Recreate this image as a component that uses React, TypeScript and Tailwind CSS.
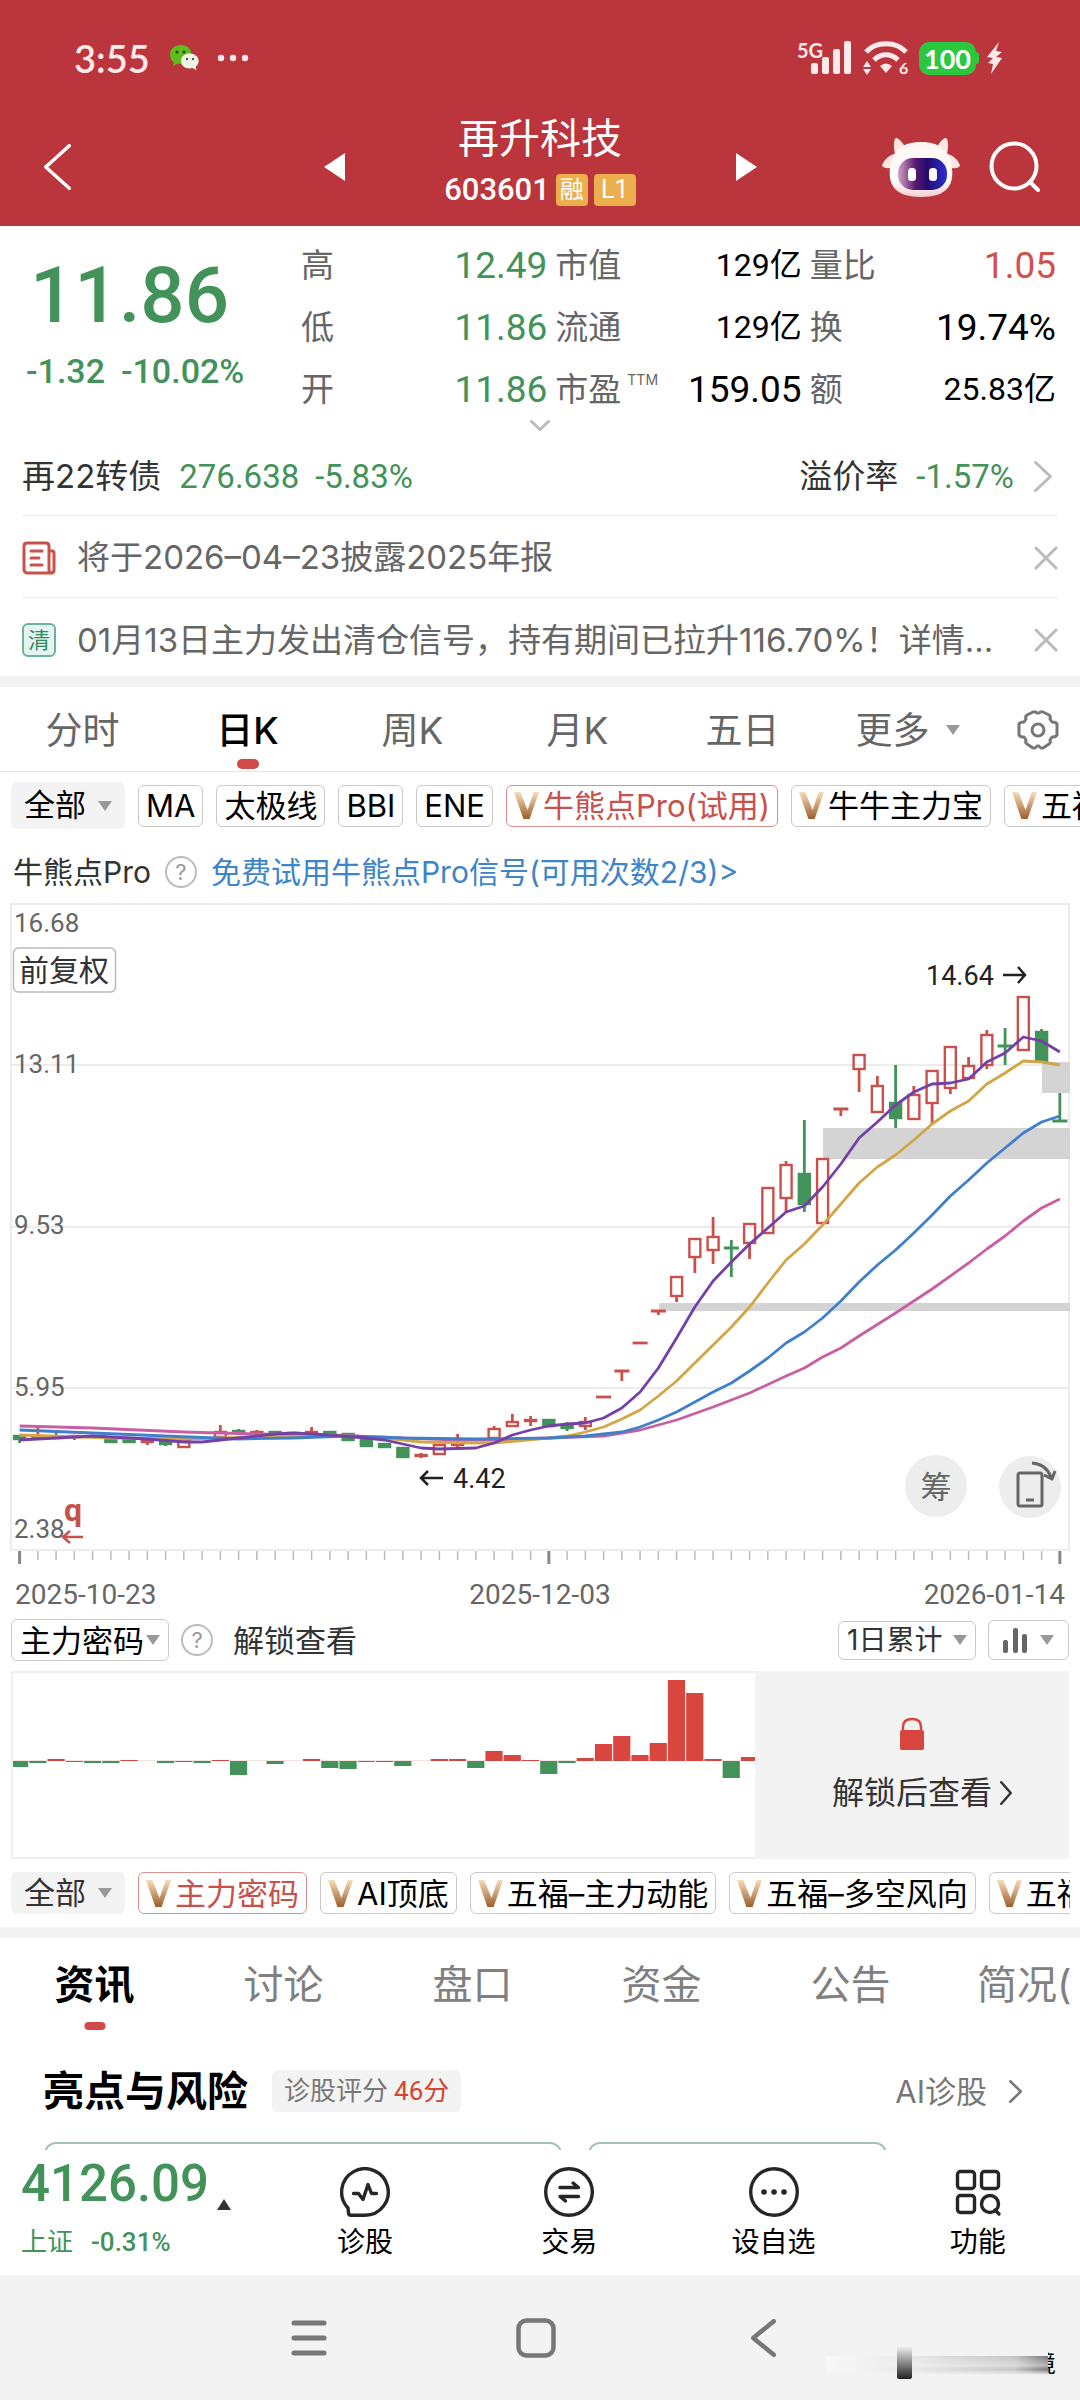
import type { ReactNode } from "react";

const NUM = "font-['Roboto','Noto_Sans_CJK_SC',sans-serif]";
const STATUS = "font-['Lato','Noto_Sans_CJK_SC',sans-serif]";

const RED = "#c9504b";
const GREEN = "#43925a";

// Chart geometry
const STEP = 18.25;
const px = (i: number) => 9.6 + STEP * i;

// [index, colour, open/close top, open/close bottom, wick top, wick bottom]
type Candle = [number, "r" | "g", number, number, number, number];

const candles: Candle[] = [
  [0, "g", 532, 537, 532, 540],
  [1, "r", 532, 534, 522, 535],
  [2, "r", 533, 535, 530, 536],
  [3, "r", 532, 535, 532, 537],
  [5, "g", 534, 540, 534, 540],
  [6, "g", 534, 540, 534, 540],
  [7, "r", 536, 540, 536, 542],
  [8, "g", 536, 542, 536, 543],
  [9, "r", 537, 545, 537, 545],
  [11, "r", 528, 535, 522, 535],
  [12, "g", 527, 530, 526, 530],
  [13, "r", 528, 531, 527, 532],
  [14, "g", 528, 531, 528, 531],
  [15, "r", 529, 531, 529, 532],
  [16, "r", 528, 530, 524, 531],
  [17, "g", 528, 530, 528, 531],
  [18, "g", 530, 538, 530, 538],
  [19, "g", 536, 544, 536, 544],
  [20, "g", 540, 545, 540, 545],
  [21, "g", 544, 555, 544, 555],
  [22, "r", 551, 554, 550, 555],
  [23, "r", 541, 552, 541, 552],
  [24, "r", 540, 543, 531, 546],
  [26, "r", 525, 536, 523, 536],
  [27, "r", 518, 524, 511, 524],
  [28, "r", 516, 519, 513, 523],
  [29, "g", 516, 524, 516, 524],
  [30, "g", 522, 526, 519, 528],
  [31, "r", 518, 524, 514, 527],
  [36, "r", 373, 394, 373, 399],
  [37, "r", 335, 355, 335, 370],
  [38, "r", 333, 348, 314, 361],
  [40, "r", 320, 341, 320, 356],
  [41, "r", 284, 331, 284, 331],
  [42, "r", 261, 296, 258, 309],
  [43, "g", 270, 302, 217, 309],
  [44, "r", 255, 321, 255, 321],
  [46, "r", 151, 167, 151, 189],
  [47, "r", 182, 210, 173, 210],
  [48, "g", 199, 216, 162, 225],
  [49, "r", 191, 217, 183, 217],
  [50, "r", 167, 201, 167, 221],
  [51, "r", 143, 186, 143, 191],
  [52, "r", 162, 176, 154, 176],
  [53, "r", 131, 163, 127, 166],
  [55, "r", 93, 148, 93, 148],
  [56, "g", 128, 159, 126, 159],
];

// Candles whose open and close are equal: [index, colour, level, high, low]
const dojis: [number, "r" | "g", number, number, number][] = [
  [32, "r", 494, 494, 494],
  [33, "r", 468, 468, 478],
  [34, "r", 440, 440, 440],
  [35, "r", 408, 408, 412],
  [39, "g", 345, 337, 374],
  [45, "r", 206, 206, 213],
  [54, "g", 143, 125, 162],
  [57, "g", 218, 190, 218],
];

type Line = { color: string; points: [number, number][] };

const lines: Line[] = [
  {
    color: "#c95fa3",
    points: [
      [0, 523], [4, 525], [9, 529], [13, 531], [17, 532], [21, 535], [24, 537], [26, 537],
      [29, 535], [32, 533], [34, 527], [36, 517], [38, 504], [40, 490], [42, 473], [43, 465],
      [44, 454], [45, 445], [46, 433], [48, 410], [50, 386], [52, 360], [53, 346], [54, 333],
      [55, 318], [56, 305], [57, 296],
    ],
  },
  {
    color: "#d3a545",
    points: [
      [0, 532], [5, 535], [9, 536], [13, 534], [17, 532], [20, 535], [22, 539], [25, 540],
      [26, 540], [29, 535], [30, 533], [31, 529], [32, 524], [33, 516], [34, 507], [35, 493],
      [36, 478], [37, 460], [38, 442], [39, 424], [40, 404], [41, 380], [42, 357], [43, 341],
      [44, 322], [45, 301], [46, 280], [47, 264], [48, 252], [49, 237], [50, 221], [51, 208],
      [52, 198], [53, 181], [54, 170], [55, 158], [56, 159], [57, 162],
    ],
  },
  {
    color: "#3f7fcb",
    points: [
      [0, 527], [4, 530], [8, 533], [12, 536], [15, 535], [18, 533], [21, 535], [25, 536],
      [29, 535], [31, 533], [33, 529], [34, 524], [35, 517], [36, 509], [37, 499], [38, 489],
      [39, 480], [40, 468], [41, 455], [42, 440], [43, 429], [44, 415], [45, 398], [46, 379],
      [47, 362], [48, 347], [49, 330], [50, 312], [51, 293], [52, 277], [53, 260], [54, 245],
      [55, 230], [56, 219], [57, 213],
    ],
  },
  {
    color: "#7440a8",
    points: [
      [0, 537], [3, 534], [4, 533], [7, 536], [9, 539], [10, 539], [12, 535], [14, 531],
      [15, 530], [17, 532], [19, 535], [20, 537], [21, 541], [22, 545], [23, 546], [25, 545],
      [26, 540], [27, 532], [28, 527], [29, 523], [30, 521], [31, 520], [32, 515], [33, 505],
      [34, 489], [35, 465], [36, 435], [37, 404], [38, 378], [39, 359], [40, 341], [41, 325],
      [42, 309], [43, 303], [44, 284], [45, 261], [46, 235], [47, 219], [48, 202], [49, 189],
      [50, 181], [51, 180], [52, 176], [53, 159], [54, 150], [55, 134], [56, 138], [57, 149],
    ],
  },
];

const gaps = [
  { x: 649, y: 400, h: 8 },
  { x: 813, y: 225, h: 31 },
  { x: 1032, y: 159, h: 31 },
];

// Main-force volume, positive above the zero line
const volumes = [
  -6, -2, 2, -1, -2, -2, 1, 0, -2, -1, -2, 1, -14, 0, -3, 0, 2, -7, -8, -1, -1, -5, 0, 2, 2, -7,
  10, 6, 1, -13, -2, 3, 17, 25, 6, 18, 81, 68, 2, -17, 4,
];

function Chevron({ dir, w, h, stroke, className = "" }: { dir: "left" | "right" | "down"; w: number; h: number; stroke: number; className?: string }) {
  const m = stroke / 2;
  const d = {
    left: `M${w - m} ${m}L${m} ${h / 2}L${w - m} ${h - m}`,
    right: `M${m} ${m}L${w - m} ${h / 2}L${m} ${h - m}`,
    down: `M${m} ${m}L${w / 2} ${h - m}L${w - m} ${m}`,
  }[dir];
  return (
    <svg width={w} height={h} className={className} fill="none" stroke="currentColor" strokeWidth={stroke} strokeLinecap="round" strokeLinejoin="round">
      <path d={d} />
    </svg>
  );
}

function Caret() {
  return (
    <svg width="14" height="10" className="shrink-0 text-[#999]" fill="currentColor">
      <path d="M0 0h14L7 10z" />
    </svg>
  );
}

function DropDown({ label, value, className = "" }: { label: string; value: string; className?: string }) {
  return (
    <label className={`flex shrink-0 items-center ${className}`}>
      <select aria-label={label} className="appearance-none bg-transparent outline-none">
        <option>{value}</option>
      </select>
      <Caret />
    </label>
  );
}

function VipMark() {
  return (
    <svg width="25" height="27" viewBox="0 0 24 27" preserveAspectRatio="none" className="shrink-0">
      <defs>
        <linearGradient id="vip" x1="0" y1="0" x2="0" y2="1">
          <stop offset="0" stopColor="#f8dcb8" />
          <stop offset="1" stopColor="#9c5f2e" />
        </linearGradient>
      </defs>
      <path d="M0 0h6l7 18 6-18h5l-9 27H9z" fill="url(#vip)" />
    </svg>
  );
}

function Chip({ children, vip, active }: { children: ReactNode; vip?: boolean; active?: boolean }) {
  return (
    <button
      className={`flex h-[42px] shrink-0 items-center gap-1 rounded-md border px-[7px] text-[31px] leading-none whitespace-nowrap ${
        active ? "border-[#d98f8b] text-[#c9504b]" : "border-[#c9c9c9] text-black"
      }`}
    >
      {vip && <VipMark />}
      {children}
    </button>
  );
}

function Help() {
  return (
    <button aria-label="说明" className="flex size-8 shrink-0 items-center justify-center rounded-full border-2 border-[#bbb] text-[22px] leading-none text-[#999]">
      ?
    </button>
  );
}

function StatusBar() {
  return (
    <div className={`flex h-19 items-start justify-between pt-10 pr-[77px] pl-[74px] text-[#ffe9ea] ${STATUS}`}>
      <div className="flex h-9 items-center">
        <span className="text-[38px] leading-9 font-semibold">3:55</span>
        <svg width="29" height="26" viewBox="0 0 29 26" className="ml-5">
          <path d="M10.500 0C4.500 0 0 4 0 9.500c0 3.500 1.500 6 4 8l-1 3.500 4.500-2.500c8 1.500 14-3 14-9C21.500 4 17 0 10.500 0z" fill="#5fbb1e" />
          <circle cx="7" cy="7" r="1.500" fill="#1d4a08" />
          <circle cx="14" cy="7" r="1.500" fill="#1d4a08" />
          <path d="M19.500 8.500c-5 0-8.500 3.300-8.500 7.500s3.500 7.500 8.500 7.500c1 0 2-.1 3-.4L26.500 25l-.8-3.400c2-1.500 3-3.300 3-5.600 0-4.200-4-7.500-9.200-7.500z" fill="#eef6e6" />
          <circle cx="17" cy="14" r="1.200" fill="#555" />
          <circle cx="23" cy="14" r="1.200" fill="#555" />
        </svg>
        <svg width="32" height="8" className="ml-[18px]" fill="currentColor">
          <circle cx="4" cy="4" r="3.200" />
          <circle cx="16" cy="4" r="3.200" />
          <circle cx="28" cy="4" r="3.200" />
        </svg>
      </div>
      <div className="flex h-9 items-center">
        <span className="self-start text-[20px] leading-none font-bold">5G</span>
        <svg width="42" height="34" viewBox="0 0 42 34" className="-ml-3" fill="currentColor">
          <rect x="0" y="22" width="7" height="11" rx="2" />
          <rect x="11" y="16" width="7" height="17" rx="2" />
          <rect x="22" y="8" width="7" height="25" rx="2" />
          <rect x="33" y="0" width="7" height="33" rx="2" />
        </svg>
        <svg width="46" height="34" viewBox="0 0 46 34" className="ml-2.5 overflow-visible" fill="none" stroke="currentColor">
          <path d="M3 11C13 0 33 0 43 11" strokeWidth="5" />
          <path d="M11 19c7-7 17-7 24 0" strokeWidth="5" />
          <path d="M17 25q6-5 12 0l-6 7z" fill="currentColor" stroke="none" />
          <path d="M0 26l4-6 4 6zM0 28l4 6 4-6z" fill="currentColor" stroke="none" />
          <text x="36" y="33" fontSize="16" fontWeight="700" fill="currentColor" stroke="none">6</text>
        </svg>
        <div className="ml-2.5 flex h-[33px] w-[57px] items-center justify-center rounded-[10px] bg-[#2bc83f] text-[27px] leading-none font-bold text-white">100</div>
        <div className="h-3 w-[3px] rounded-r-sm bg-[#2bc83f]" />
        <svg width="16" height="32" viewBox="0 0 16 32" className="ml-2" fill="currentColor">
          <path d="M12 0L0 15l6 1-5 5 5 1-2 10L15 16l-6-1 6-5-6-1z" />
        </svg>
      </div>
    </div>
  );
}

function Robot() {
  return (
    <svg width="78" height="61" viewBox="0 0 78 61">
      <defs>
        <linearGradient id="face" x1="0" y1="0" x2="1" y2="0">
          <stop offset="0" stopColor="#d3a3c4" />
          <stop offset="0.350" stopColor="#5a1a72" />
          <stop offset="0.600" stopColor="#250a6e" />
          <stop offset="1" stopColor="#2a2fd6" />
        </linearGradient>
        <linearGradient id="head" x1="0" y1="0" x2="0" y2="1">
          <stop offset="0" stopColor="#fdf4f2" />
          <stop offset="0.700" stopColor="#ffffff" />
          <stop offset="1" stopColor="#f3cfd0" />
        </linearGradient>
      </defs>
      <path d="M13 17C11 8 12 0 15 1c4 2 7 7 9 11zM65 17c2-9 1-17-2-16-4 2-7 7-9 11z" fill="#fbe6e2" />
      <path d="M15 16C6 18 1 24 0 29c3 3 9 3 14 0zM63 16c9 2 14 8 15 13-3 3-9 3-14 0z" fill="#fbe6e2" />
      <path d="M39 5C19 5 10 15 8 31c-2 18 6 29 31 29s33-11 31-29C68 15 59 5 39 5z" fill="url(#head)" />
      <rect x="16" y="21" width="49" height="32" rx="15" fill="url(#face)" />
      <rect x="26" y="31" width="8" height="13" rx="3.500" fill="#fff" />
      <rect x="47" y="31" width="8" height="13" rx="3.500" fill="#fff" />
    </svg>
  );
}

function Header() {
  return (
    <header className="bg-[#bb353c] text-white">
      <StatusBar />
      <div className="grid h-[150px] grid-cols-[1fr_433px_1fr] items-center px-10 pt-8">
        <button aria-label="返回" className="ml-1 justify-self-start">
          <Chevron dir="left" w={27} h={46} stroke={3.5} />
        </button>
        <div className="flex items-center justify-between">
          <button aria-label="上一只">
            <svg width="21" height="28" fill="currentColor"><path d="M21 0v28L0 14z" /></svg>
          </button>
          <div className="flex flex-col items-center gap-[15px] pb-3">
            <h1 className="text-[41px] leading-[42px]">再升科技</h1>
            <div className="flex h-8 items-center gap-1.5">
              <span className={`text-[31px] leading-none font-medium ${NUM}`}>603601</span>
              <span className="flex size-8 items-center justify-center rounded bg-[#ebaf4e] text-[24px] leading-none">融</span>
              <span className={`flex h-8 w-[42px] items-center justify-center rounded bg-[#ebaf4e] text-[25px] leading-none ${NUM}`}>L1</span>
            </div>
          </div>
          <button aria-label="下一只">
            <svg width="21" height="28" fill="currentColor"><path d="M0 0v28l21-14z" /></svg>
          </button>
        </div>
        <div className="flex items-center gap-7 justify-self-end">
          <button aria-label="智能助手"><Robot /></button>
          <button aria-label="搜索">
            <svg width="52" height="52" viewBox="0 0 52 52" fill="none" stroke="currentColor" strokeWidth="4" strokeLinecap="round">
              <circle cx="26" cy="25" r="22.500" />
              <path d="M42 41l8 8" />
            </svg>
          </button>
        </div>
      </div>
    </header>
  );
}

const stats = [
  { name: "高", value: "12.49", tone: "text-[#43925a]" },
  { name: "市值", value: "129亿", tone: "text-black", small: true },
  { name: "量比", value: "1.05", tone: "text-[#d2504c]" },
  { name: "低", value: "11.86", tone: "text-[#43925a]" },
  { name: "流通", value: "129亿", tone: "text-black", small: true },
  { name: "换", value: "19.74%", tone: "text-black" },
  { name: "开", value: "11.86", tone: "text-[#43925a]" },
  { name: "市盈", mark: "TTM", value: "159.05", tone: "text-black" },
  { name: "额", value: "25.83亿", tone: "text-black", small: true },
];

function Quote() {
  return (
    <section className="pt-2">
      <div className="flex pr-6">
        <div className={`w-[301px] shrink-0 pl-[26px] text-[#43925a] ${NUM}`}>
          <div className="pt-6 pl-1 text-[78px] leading-[76px] font-medium">11.86</div>
          <div className="mt-5 flex gap-4 text-[34px] leading-[34px] font-medium">
            <span>-1.32</span>
            <span>-10.02%</span>
          </div>
        </div>
        <dl className="grid flex-1 grid-cols-3 gap-x-2">
          {stats.map((s) => (
            <div key={s.name} className="flex h-[62px] items-center justify-between">
              <dt className="flex text-[33px] leading-none text-[#666]">
                {s.name}
                {s.mark && <sup className="top-0 ml-1.5 self-start text-[14px] leading-none">{s.mark}</sup>}
              </dt>
              <dd className={`leading-none ${NUM} ${s.tone} ${s.small ? "text-[32px]" : "text-[37px]"}`}>{s.value}</dd>
            </div>
          ))}
        </dl>
      </div>
      <button aria-label="展开" className="flex h-[18px] w-full items-start justify-center text-[#bbb]">
        <Chevron dir="down" w={20} h={11} stroke={3} />
      </button>
    </section>
  );
}

function Close() {
  return (
    <button aria-label="关闭" className="ml-auto text-[#bbb]">
      <svg width="24" height="24" fill="none" stroke="currentColor" strokeWidth="3" strokeLinecap="round">
        <path d="M2 2l20 20M22 2L2 22" />
      </svg>
    </button>
  );
}

function Notices() {
  return (
    <section className="px-[22px] text-[33px] leading-none whitespace-nowrap">
      <a href="#bond" className="flex h-[78px] items-center border-b border-[#eee] text-[#333]">
        <span>再22转债</span>
        <span className={`ml-[18px] flex gap-4 text-[33px] text-[#43925a] ${NUM}`}>
          <span>276.638</span>
          <span>-5.83%</span>
        </span>
        <span className="ml-auto">溢价率</span>
        <span className={`ml-[18px] text-[33px] text-[#43925a] ${NUM}`}>-1.57%</span>
        <Chevron dir="right" w={18} h={31} stroke={3} className="mr-1.5 ml-5 text-[#bbb]" />
      </a>
      <div className="flex h-[82px] items-center border-b border-[#eee] pt-0.5 text-[#666]">
        <svg width="34" height="34" viewBox="0 0 34 34" fill="none" stroke="#c9504b" strokeWidth="3" strokeLinejoin="round" strokeLinecap="round">
          <path d="M27 10V5q0-3-3-3H5Q2 2 2 5v23q0 4 4 4h23q3 0 3-3V12q0-2-2-2h-3v19q0 3 3 3" />
          <path d="M9 10h11M9 17h8M9 24h11" />
        </svg>
        <span className="ml-[21px]">将于2026–04–23披露2025年报</span>
        <Close />
      </div>
      <div className="flex h-[78px] items-center pt-1.5 text-[#666]">
        <span className="flex size-[34px] shrink-0 items-center justify-center rounded-md border-2 border-[#6db39c] bg-[#e6f4f1] text-[22px] text-[#2f8a5c]">清</span>
        <span className="ml-[21px]">01月13日主力发出清仓信号，持有期间已拉升116.70%！详情...</span>
        <Close />
      </div>
    </section>
  );
}

function PeriodTabs() {
  const tabs = ["分时", "日K", "周K", "月K", "五日"];
  return (
    <nav className="flex h-[85px] items-center border-b border-[#e6e6e6] pt-0.5 text-[37px] leading-none text-[#666]">
      {tabs.map((t) => (
        <button key={t} className={`relative h-full flex-1 ${t === "日K" ? "font-medium text-black" : ""}`}>
          {t}
          {t === "日K" && <span className="absolute bottom-0.5 left-1/2 h-2.5 w-[22px] -translate-x-1/2 rounded-full bg-[#d24a47]" />}
        </button>
      ))}
      <DropDown label="更多周期" value="更多" className="flex-1 justify-center gap-4" />
      <button aria-label="设置" className="flex w-[90px] justify-center pl-1.5">
        <svg width="42" height="42" viewBox="0 0 42 42" fill="none" stroke="#777" strokeWidth="3" strokeLinejoin="round">
          <path d="M16 3q2-1 4 1h2q2-2 4-1l6 3q2 1 1 4l2 3q4 0 5 2v11q-1 2-5 2l-2 3q1 3-1 4l-6 4q-2 1-4-2h-2q-2 3-4 2l-6-4q-2-1-1-4l-2-3q-4 0-5-2V15q1-2 5-2l2-3q-1-3 1-4z" />
          <circle cx="21" cy="21" r="6" />
        </svg>
      </button>
    </nav>
  );
}

function KLineChart() {
  return (
    <svg viewBox="0 0 1060 676" className={`block h-auto w-full ${NUM}`} role="img" aria-label="日K线图">
      <g stroke="#ececec" strokeWidth="2" fill="none">
        <rect x="1" y="1" width="1058" height="646" />
        <path d="M1 162H1059M1 324H1059M1 485H1059" />
      </g>
      {gaps.map((g) => (
        <rect key={g.x} x={g.x} y={g.y} width={1060 - g.x} height={g.h} fill="#d4d4d4" />
      ))}
      {Array.from({ length: 58 }, (_, i) => {
        const major = i === 0 || i === 29 || i === 57;
        return <path key={i} d={`M${px(i)} 648V${major ? 661 : 657}`} stroke={major ? "#888" : "#bbb"} strokeWidth={major ? 3 : 1.5} />;
      })}
      {candles.map(([i, c, top, bottom, high, low]) => {
        const color = c === "r" ? RED : GREEN;
        const hollow = c === "r" && bottom - top > 4;
        return (
          <g key={i} stroke={color} strokeWidth="2.400">
            <path d={`M${px(i)} ${high}V${top}M${px(i)} ${bottom}V${low}`} strokeWidth="2.800" />
            <rect x={px(i) - 5.5} y={top + 1} width="11" height={Math.max(bottom - top - 2, 1)} fill={hollow ? "none" : color} />
          </g>
        );
      })}
      {dojis.map(([i, c, level, high, low]) => (
        <path key={i} d={`M${px(i) - 7.500} ${level}h15M${px(i)} ${high}V${low}`} stroke={c === "r" ? RED : GREEN} strokeWidth="2.800" />
      ))}
      {lines.map((l) => (
        <polyline key={l.color} points={l.points.map(([i, y]) => `${px(i)},${y}`).join(" ")} fill="none" stroke={l.color} strokeWidth="2.800" strokeLinejoin="round" />
      ))}
      <g fontSize="26" fill="#666">
        <text x="4" y="29">16.68</text>
        <text x="4" y="170">13.11</text>
        <text x="4" y="331">9.53</text>
        <text x="4" y="493">5.95</text>
        <text x="4" y="635">2.38</text>
      </g>
      <rect x="3.500" y="45" width="102" height="44" rx="5" fill="#fff" stroke="#bbb" strokeWidth="1.500" />
      <text x="9" y="78" fontSize="30" fill="#333">前复权</text>
      <g fontSize="27" fill="#222">
        <text x="916" y="82">14.64</text>
        <text x="443" y="585">4.42</text>
      </g>
      <g fill="none" stroke="#222" strokeWidth="2.500">
        <path d="M993 72h22M1008 64l7 8-7 8" />
        <path d="M433 575h-22M418 568l-7 7 7 7" />
      </g>
      <text x="54" y="618" fontSize="32" fontWeight="700" fill={RED}>q</text>
      <path d="M73 634H53M60 628l-7 6 7 6" fill="none" stroke={RED} strokeWidth="2.500" />
      <circle cx="926" cy="583" r="31" fill="#ededed" />
      <text x="926" y="595" fontSize="31" fill="#666" textAnchor="middle">筹</text>
      <circle cx="1020" cy="584" r="31" fill="#ededed" />
      <g fill="none" stroke="#666" strokeWidth="3" strokeLinejoin="round">
        <rect x="1008" y="570" width="24" height="33" rx="2" />
        <path d="M1016 597h8" />
        <path d="M1022 560q14 1 19 14M1034 572l8 4 3-8" />
      </g>
    </svg>
  );
}

function MainChart() {
  return (
    <section>
      <div className="flex h-[67px] items-center gap-[13px] overflow-hidden pl-[11px]">
        <DropDown label="指标分类" value="全部" className="h-[47px] gap-3 rounded-md bg-[#f3f3f3] px-[13px] text-[31px]" />
        <Chip>MA</Chip>
        <Chip>太极线</Chip>
        <Chip>BBI</Chip>
        <Chip>ENE</Chip>
        <Chip vip active>牛熊点Pro(试用)</Chip>
        <Chip vip>牛牛主力宝</Chip>
        <Chip vip>五福</Chip>
      </div>
      <div className="flex h-16 items-center gap-[14px] pt-0.5 pl-[13px] text-[30px] leading-none">
        <span className="text-[#333]">牛熊点Pro</span>
        <Help />
        <a href="#trial" className="text-[#3e84c8]">免费试用牛熊点Pro信号(可用次数2/3)&gt;</a>
      </div>
      <div className="px-2.5">
        <KLineChart />
      </div>
      <div className={`flex h-8 items-center justify-between px-[15px] text-[28px] leading-none text-[#666] ${NUM}`}>
        <span>2025-10-23</span>
        <span>2025-12-03</span>
        <span>2026-01-14</span>
      </div>
    </section>
  );
}

function MainForce() {
  return (
    <section>
      <div className="flex h-[58px] items-center px-[11px] text-[31px] leading-none">
        <DropDown label="副图指标" value="主力密码" className="mr-3 h-[42px] gap-0.5 rounded-md border border-[#c9c9c9] px-2" />
        <Help />
        <a href="#unlock" className="ml-5 text-[#333]">解锁查看</a>
        <DropDown label="周期" value="1日累计" className="mr-3 ml-auto h-[39px] gap-2.5 rounded-md border border-[#c9c9c9] px-2 text-[28px] text-[#333]" />
        <button aria-label="图形样式" className="flex h-10 w-[81px] items-center justify-center gap-3 rounded-md border border-[#c9c9c9]">
          <svg width="25" height="25" fill="#666">
            <rect x="0" y="12" width="5" height="13" rx="2" />
            <rect x="10" y="0" width="5" height="25" rx="2" />
            <rect x="19" y="6" width="5" height="19" rx="2" />
          </svg>
          <Caret />
        </button>
      </div>
      <div className="px-[11px] pt-0.5">
        <div className="flex h-[188px]">
          <div className="min-w-0 grow-[744] basis-0 overflow-hidden border-y-2 border-l-2 border-[#efefef]">
            <svg viewBox="0 0 742 184" className="block size-full" preserveAspectRatio="none" role="img" aria-label="主力密码柱状图">
              <path d="M0 87.500H742" stroke="#f3e3e2" strokeWidth="1" />
              {volumes.map((v, i) => (
                <rect key={i} x={i * STEP - 2} y={v > 0 ? 88 - v : 88} width="17.200" height={Math.abs(v)} fill={v > 0 ? "#d9463f" : GREEN} />
              ))}
            </svg>
          </div>
          <button className="flex grow-[315] basis-0 flex-col items-center bg-[#f3f3f3] pt-[46px] text-[32px] leading-none text-[#333]">
            <svg width="26" height="34" viewBox="0 0 26 34" fill="none">
              <path d="M4 15V10q0-8 9-8t9 8v5" stroke="#d9463f" strokeWidth="2.500" />
              <rect x="1" y="13" width="24" height="20" rx="2" fill="#d9463f" />
            </svg>
            <span className="relative mt-[26px]">
              解锁后查看
              <Chevron dir="right" w={12} h={24} stroke={2.5} className="absolute top-1 left-full ml-2" />
            </span>
          </button>
        </div>
      </div>
      <div className="mr-2.5 flex h-[68px] items-center gap-[13px] overflow-hidden pl-[11px]">
        <DropDown label="指标分类" value="全部" className="h-[42px] gap-3 rounded-md bg-[#f3f3f3] px-[13px] text-[31px] text-[#333]" />
        <Chip vip active>主力密码</Chip>
        <Chip vip>AI顶底</Chip>
        <Chip vip>五福–主力动能</Chip>
        <Chip vip>五福–多空风向</Chip>
        <Chip vip>五福</Chip>
      </div>
    </section>
  );
}

function News() {
  const tabs = ["资讯", "讨论", "盘口", "资金", "公告"];
  return (
    <section>
      <nav className="flex h-[94px] items-center overflow-hidden text-[40px] leading-none whitespace-nowrap text-[#808080]">
        {tabs.map((t, i) => (
          <button key={t} className={`relative h-full w-[17.5%] shrink-0 ${i === 0 ? "font-bold text-black" : ""}`}>
            {t}
            {i === 0 && <span className="absolute bottom-0.5 left-1/2 h-2 w-[21px] -translate-x-1/2 rounded-full bg-[#d24a47]" />}
          </button>
        ))}
        <button className="h-full shrink-0 pl-8">简况(</button>
      </nav>
      <div className="flex h-[110px] items-center pt-2 pr-[58px] pl-[43px] leading-none">
        <h2 className="text-[41px] font-bold text-black">亮点与风险</h2>
        <span className="ml-6 flex h-[42px] items-center gap-1.5 rounded-md bg-[#f3f3f3] px-3 text-[26px] text-[#777]">
          诊股评分
          <span className={`text-[#d2452f] ${NUM}`}>46分</span>
        </span>
        <a href="#ai" className="ml-auto flex items-center gap-[22px] text-[31px] text-[#777]">
          AI诊股
          <Chevron dir="right" w={13} h={23} stroke={2.5} />
        </a>
      </div>
      <div className="flex h-2 gap-[26px] overflow-hidden pl-11">
        <div className="h-24 w-[518px] shrink-0 rounded-xl border-2 border-[#a3bfb8]" />
        <div className="h-24 w-[299px] shrink-0 rounded-xl border-2 border-[#a3bfb8]" />
      </div>
    </section>
  );
}

const actions: { name: string; icon: ReactNode }[] = [
  {
    name: "诊股",
    icon: (
      <>
        <path d="M8 41A23.300 23.300 0 1 1 25 48.300H11q-2.500 0-2.500-2.500z" />
        <path d="M13.500 26.500h5l4.500 6 5-15 3.500 9h5" />
      </>
    ),
  },
  {
    name: "交易",
    icon: (
      <>
        <circle cx="25" cy="25" r="23.300" />
        <path d="M16 20.500h18.500l-5.500-4.500M34.500 29.500H16l5.500 4.500" />
      </>
    ),
  },
  {
    name: "设自选",
    icon: (
      <>
        <circle cx="25" cy="25" r="23.300" />
        <path d="M15 25h.1M25 25h.1M35 25h.1" strokeWidth="5.500" />
      </>
    ),
  },
  {
    name: "功能",
    icon: (
      <>
        <rect x="4.500" y="4.500" width="17" height="17" rx="3" />
        <rect x="28.500" y="4.500" width="17" height="17" rx="3" />
        <rect x="4.500" y="28.500" width="17" height="17" rx="3" />
        <circle cx="37" cy="37" r="8.500" />
        <path d="M42 43l4 4" />
      </>
    ),
  },
];

function BottomBar() {
  return (
    <footer className="flex h-[125px] bg-white">
      <div className={`w-[263px] shrink-0 pt-2 pl-[21px] text-[#43925a] ${NUM}`}>
        <div className="flex items-end gap-2 text-[51px] leading-[52px] font-medium">
          4126.09
          <svg width="14" height="11" fill="#333"><path d="M7 0l7 11H0z" /></svg>
        </div>
        <div className="mt-3.5 flex gap-[18px] text-[26px] leading-9">
          <span>上证</span>
          <span className="font-medium">-0.31%</span>
        </div>
      </div>
      {actions.map((a) => (
        <button key={a.name} className="flex flex-1 flex-col items-center pt-[17px] text-[28px] leading-9 text-black">
          <svg width="50" height="50" viewBox="0 0 50 50" fill="none" stroke="#262626" strokeWidth="3.400" strokeLinecap="round" strokeLinejoin="round">
            {a.icon}
          </svg>
          <span className="mt-[7px]">{a.name}</span>
        </button>
      ))}
    </footer>
  );
}

function SystemNav() {
  return (
    <div className="relative flex min-h-[125px] flex-1 items-center justify-center gap-[187px] bg-[#f3f3f3] pr-2 text-[#777]">
      <button aria-label="最近任务" className="flex w-10 justify-center">
        <svg width="36" height="36" stroke="currentColor" strokeWidth="5" strokeLinecap="round"><path d="M3 3h30M3 18h30M3 33h30" /></svg>
      </button>
      <button aria-label="主页" className="flex w-10 justify-center">
        <svg width="40" height="40" fill="none" stroke="currentColor" strokeWidth="4.500"><rect x="2.500" y="2.500" width="35" height="35" rx="8" /></svg>
      </button>
      <button aria-label="后退" className="flex w-10 justify-center">
        <Chevron dir="left" w={25} h={38} stroke={4.5} />
      </button>
      <div className="absolute right-6 bottom-5 flex h-8 items-center">
        <svg width="222" height="36" viewBox="0 0 222 36">
          <defs>
            <linearGradient id="smear" x1="0" y1="0" x2="1" y2="0">
              <stop offset="0" stopColor="#fafafa" />
              <stop offset="0.400" stopColor="#e6e6e6" />
              <stop offset="0.850" stopColor="#c4c4c4" />
              <stop offset="1" stopColor="#777777" />
            </linearGradient>
            <linearGradient id="fade" x1="0" y1="0" x2="0" y2="1">
              <stop offset="0" stopColor="#f3f3f3" stopOpacity="0" />
              <stop offset="0.500" stopColor="#f3f3f3" stopOpacity="0.500" />
              <stop offset="0.700" stopColor="#f3f3f3" stopOpacity="0" />
              <stop offset="1" stopColor="#f3f3f3" />
            </linearGradient>
            <linearGradient id="blot" x1="0" y1="0" x2="0" y2="1">
              <stop offset="0" stopColor="#f3f3f3" />
              <stop offset="1" stopColor="#222222" />
            </linearGradient>
          </defs>
          <rect x="0" y="10" width="222" height="19" fill="url(#smear)" />
          <rect x="0" y="10" width="222" height="19" fill="url(#fade)" />
          <rect x="71" y="0" width="15" height="33" rx="2" fill="url(#blot)" />
        </svg>
        <span className="flex w-2 justify-end overflow-hidden text-[24px] leading-none text-black">境</span>
      </div>
    </div>
  );
}

export default function App() {
  return (
    <div className="flex min-h-screen flex-col overflow-hidden bg-white font-['Inter','Noto_Sans_CJK_SC',sans-serif] text-black">
      <Header />
      <Quote />
      <Notices />
      <div className="h-[11px] bg-[#f3f3f3]" />
      <PeriodTabs />
      <MainChart />
      <MainForce />
      <div className="h-[11px] bg-[#f3f3f3]" />
      <News />
      <BottomBar />
      <SystemNav />
    </div>
  );
}
